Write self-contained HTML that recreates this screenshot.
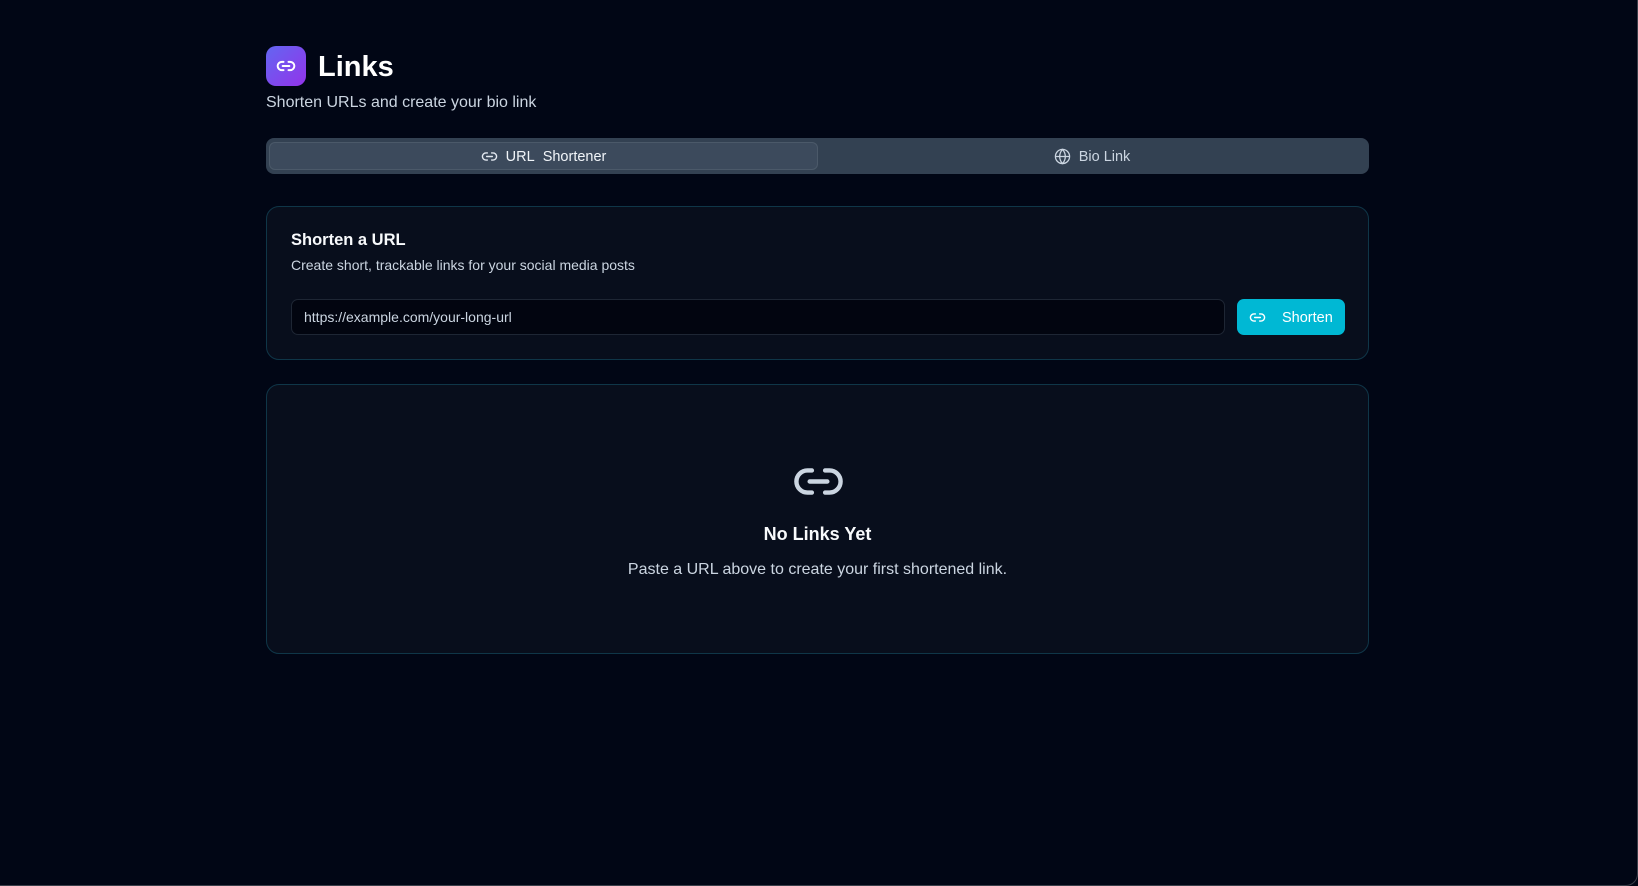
<!DOCTYPE html>
<html><head><meta charset="utf-8"><style>
*{box-sizing:border-box;margin:0;padding:0}
html,body{width:1638px;height:886px;background:#010615;overflow:hidden;font-family:"Liberation Sans",sans-serif;color:#fff}
.abs{position:absolute}
.card{position:absolute;left:266px;width:1103px;background:#080e1c;border:1px solid #0f3648;border-radius:13px}
svg{display:block}
</style></head><body>
<div class="abs" style="left:266px;top:46px;width:40px;height:40px;border-radius:10px;background:linear-gradient(135deg,#6366f1,#9333ea);display:flex;align-items:center;justify-content:center">
<svg width="20" height="20" viewBox="0 0 24 24" fill="none" stroke="#fff" stroke-width="2.4" stroke-linecap="round"><path d="M9 17H7A5 5 0 0 1 7 7h2"/><path d="M15 7h2a5 5 0 1 1 0 10h-2"/><line x1="8" y1="12" x2="16" y2="12"/></svg></div>
<div class="abs" style="left:318px;top:48px;font-size:29px;font-weight:bold;line-height:38px">Links</div>
<div class="abs" style="left:266px;top:92px;font-size:16px;color:#cbd5e1;line-height:22px">Shorten URLs and create your bio link</div>

<div class="abs" style="left:266px;top:138px;width:1103px;height:36px;background:#334152;border-radius:8px"></div>
<div class="abs" style="left:269px;top:142px;width:549px;height:28px;background:#3c4a5c;border:1px solid #4b5969;border-radius:6px;display:flex;align-items:center;justify-content:center;font-size:14.5px;color:#f1f5f9;padding-top:1px">
<svg width="17" height="17" viewBox="0 0 24 24" fill="none" stroke="#e2e8f0" stroke-width="2" stroke-linecap="round" style="margin-right:8px"><path d="M9 17H7A5 5 0 0 1 7 7h2"/><path d="M15 7h2a5 5 0 1 1 0 10h-2"/><line x1="8" y1="12" x2="16" y2="12"/></svg>URL&nbsp; Shortener</div>
<div class="abs" style="left:818px;top:142px;width:548px;height:28px;display:flex;align-items:center;justify-content:center;font-size:14.5px;color:#cbd5e1;padding-top:1px">
<svg width="17" height="17" viewBox="0 0 24 24" fill="none" stroke="#cbd5e1" stroke-width="1.8" style="margin-right:8px"><circle cx="12" cy="12" r="10"/><path d="M2 12h20"/><path d="M12 2a15 15 0 0 1 4 10 15 15 0 0 1-4 10 15 15 0 0 1-4-10 15 15 0 0 1 4-10z"/></svg>Bio Link</div>

<div class="card" style="top:206px;height:154px">
<div class="abs" style="left:24px;top:24px;font-size:16.5px;font-weight:bold;color:#f8fafc">Shorten a URL</div>
<div class="abs" style="left:24px;top:50px;font-size:14px;color:#cbd5e1">Create short, trackable links for your social media posts</div>
<div class="abs" style="left:24px;top:92px;width:934px;height:36px;background:#020510;border:1px solid #1e2634;border-radius:7px;padding-left:12px;line-height:35px;font-size:14px;color:#cbd5e1">https://example.com/your-long-url</div>
<div class="abs" style="left:970px;top:92px;width:108px;height:36px;background:#00b8d4;border-radius:7px;display:flex;align-items:center;font-size:14.5px;color:#fff;padding-top:1px">
<svg width="17" height="17" viewBox="0 0 24 24" fill="none" stroke="#fff" stroke-width="2" stroke-linecap="round" style="margin-left:12px;margin-right:16px"><path d="M9 17H7A5 5 0 0 1 7 7h2"/><path d="M15 7h2a5 5 0 1 1 0 10h-2"/><line x1="8" y1="12" x2="16" y2="12"/></svg>Shorten</div>
</div>

<div class="card" style="top:384px;height:270px">
<svg class="abs" style="left:525px;top:70px" width="53" height="53" viewBox="0 0 24 24" fill="none" stroke="#cbd5e1" stroke-width="2" stroke-linecap="round"><path d="M9 17H7A5 5 0 0 1 7 7h2"/><path d="M15 7h2a5 5 0 1 1 0 10h-2"/><line x1="8" y1="12" x2="16" y2="12"/></svg>
<div class="abs" style="left:0;width:100%;top:139px;text-align:center;font-size:18px;font-weight:bold;color:#f8fafc">No Links Yet</div>
<div class="abs" style="left:0;width:100%;top:176px;text-align:center;font-size:16px;color:#cbd5e1">Paste a URL above to create your first shortened link.</div>
</div>
<div class="abs" style="left:0;top:0;width:1638px;height:886px;border-right:1px solid #3a3f4a;border-bottom:1px solid #3a3f4a;border-bottom-right-radius:12px;pointer-events:none"></div>
</body></html>
